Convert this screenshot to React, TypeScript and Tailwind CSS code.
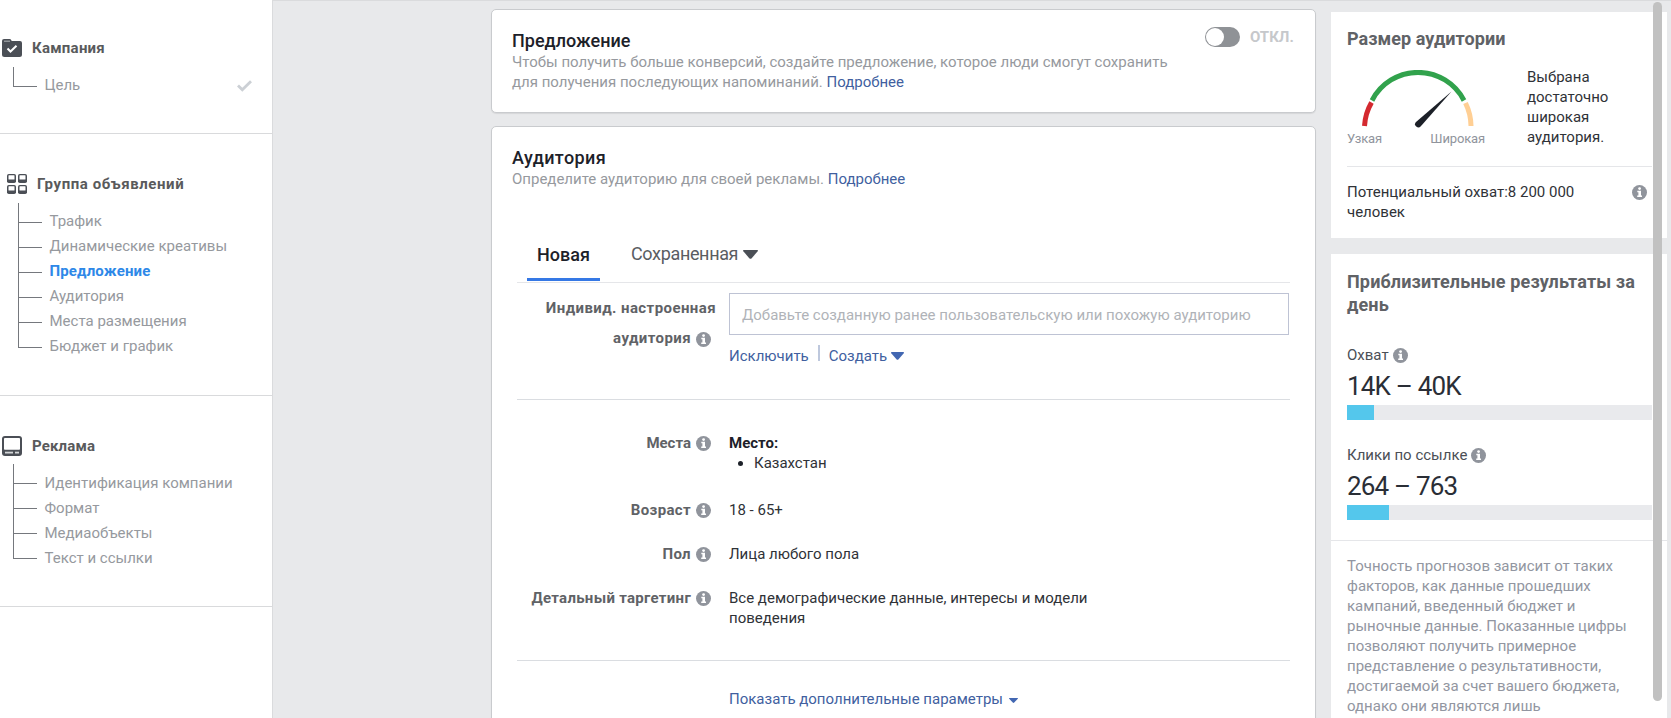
import React from "react";

type TreeItem = { label: string; active?: boolean; done?: boolean };

function FolderIcon() {
  return (
    <svg width="20" height="18" viewBox="0 0 20 18">
      <path d="M0 3.5V2a2 2 0 0 1 2-2h5.5a2 2 0 0 1 1.8 1.2l.4.8H18a2 2 0 0 1 2 2V15.500a2.500 2.500 0 0 1-2.500 2.500h-15A2.500 2.500 0 0 1 0 15.500z" fill="#4b4f56" />
      <path d="M2 2.200h6" stroke="#a4a7ab" strokeWidth="1.200" />
      <path d="M5.500 9.500l3 3L14.500 6.800" fill="none" stroke="#fff" strokeWidth="2" />
    </svg>
  );
}

function GridIcon() {
  const cells = [[0, 0], [11, 0], [0, 11], [11, 11]];
  return (
    <svg width="20" height="20" viewBox="0 0 20 20">
      {cells.map(([x, y]) => (
        <g key={`${x}-${y}`}>
          <rect x={x} y={y} width="9" height="9" rx="1.8" fill="#4b4f56" />
          <rect x={x + 1.5} y={y + 1.2} width="6" height="4.300" rx="0.500" fill="#fff" />
        </g>
      ))}
    </svg>
  );
}

function AdIcon() {
  return (
    <svg width="20" height="20" viewBox="0 0 20 20">
      <rect width="20" height="20" rx="3" fill="#4b4f56" />
      <rect x="2" y="2" width="16" height="11.700" rx="0.800" fill="#fff" />
      <rect x="3" y="15.700" width="8" height="1.800" fill="#d4d6d8" />
      <rect x="13" y="15.700" width="4" height="1.800" fill="#d4d6d8" />
    </svg>
  );
}

function Info({ className = "" }: { className?: string }) {
  return (
    <svg width="15" height="15" viewBox="0 0 15 15" className={`shrink-0 ${className}`}>
      <circle cx="7.500" cy="7.500" r="7.500" fill="#90949c" />
      <circle cx="7.600" cy="3.600" r="1.400" fill="#fff" />
      <path d="M5.300 5.800h3.700v4.700h1v1.500H5.200v-1.500h1.200V7.300H5.300z" fill="#fff" />
    </svg>
  );
}

function Caret({ w, h, color, className = "" }: { w: number; h: number; color: string; className?: string }) {
  return (
    <svg width={w} height={h} viewBox="0 0 15 9" preserveAspectRatio="none" className={`shrink-0 ${className}`}>
      <path d="M.6 0h13.800q.9.500.3 1.300L8.700 8.200q-1.200 1.300-2.400 0L.3 1.300Q-.3.500.6 0z" fill={color} />
    </svg>
  );
}

function Tree({ items, textClass }: { items: TreeItem[]; textClass: string }) {
  return (
    <ul>
      {items.map((item, i) => (
        <li key={item.label} className={`flex ${i === 0 ? "h-8" : "h-[25px]"}`}>
          <div className="flex w-6 shrink-0 flex-col">
            <div className={`border-b border-l border-[#75787d] ${i === 0 ? "h-5" : "h-[13px]"}`} />
            {i < items.length - 1 && <div className="h-3 border-l border-[#75787d]" />}
          </div>
          <div className={`flex h-[25px] grow items-center justify-between self-end pr-[20px] pl-[7.500px] ${textClass}`}>
            <span className={item.active ? "font-bold tracking-[0.15px] text-[#2d88e8]" : "text-[#96999e]"}>
              {item.label}
            </span>
            {item.done && (
              <svg width="15" height="12" viewBox="0 0 15 12" className="mt-px">
                <path d="M1 5.500l4.300 4.300L14 1.200" fill="none" stroke="#ccd0d5" strokeWidth="2.800" />
              </svg>
            )}
          </div>
        </li>
      ))}
    </ul>
  );
}

function Sidebar() {
  return (
    <nav className="w-[273px] shrink-0 border-r border-[#dadbdd] bg-white text-[15px] leading-5">
      <section className="h-[134px] border-b border-[#d9dadc] pt-[38px]">
        <div className="flex h-5 items-center gap-[10px] pl-[2px]">
          <FolderIcon />
          <h3 className="font-bold tracking-[0.25px] text-[#595a5c]">Кампания</h3>
        </div>
        <div className="pt-[9px] pl-[13px]">
          <Tree items={[{ label: "Цель", done: true }]} textClass="pb-[3px]" />
        </div>
      </section>
      <section className="h-[262px] border-b border-[#d9dadc] pt-10">
        <div className="flex h-5 items-center gap-[10px] pl-[7px]">
          <GridIcon />
          <h3 className="font-bold tracking-[0.57px] text-[#595a5c]">Группа объявлений</h3>
        </div>
        <div className="pt-[9px] pl-[18px]">
          <Tree
            textClass="pb-[3px]"
            items={[
              { label: "Трафик" },
              { label: "Динамические креативы" },
              { label: "Предложение", active: true },
              { label: "Аудитория" },
              { label: "Места размещения" },
              { label: "Бюджет и график" },
            ]}
          />
        </div>
      </section>
      <section className="h-[211px] border-b border-[#d9dadc] pt-10">
        <div className="flex h-5 items-center gap-[10px] pl-[2px]">
          <AdIcon />
          <h3 className="-mt-px font-bold tracking-[0.15px] text-[#595a5c]">Реклама</h3>
        </div>
        <div className="pt-2 pl-[13px]">
          <Tree
            textClass="pb-px"
            items={[
              { label: "Идентификация компании" },
              { label: "Формат" },
              { label: "Медиаобъекты" },
              { label: "Текст и ссылки" },
            ]}
          />
        </div>
      </section>
    </nav>
  );
}

function Link({ children }: { children: React.ReactNode }) {
  return <a className="text-[#415f9f]">{children}</a>;
}

function OfferCard() {
  return (
    <section className="flex h-[104px] items-start justify-between rounded-[5px] border border-[#c9cbce] bg-white pt-5 pl-5 shadow-[0_1px_1px_rgba(0,0,0,0.08)]">
      <div>
        <h2 className="h-[22px] text-[18px] leading-[21px] font-medium text-[#1d2129]">Предложение</h2>
        <p className="w-[670px] text-[#96999e]">
          Чтобы получить больше конверсий, создайте предложение, которое люди смогут сохранить
          <br />
          для получения последующих напоминаний. <Link>Подробнее</Link>
        </p>
      </div>
      <div className="-mt-[3px] flex items-center gap-[10px] pr-5">
        <div className="h-5 w-[35px] rounded-full bg-[#8f9296] p-px">
          <div className="h-[18px] w-[18px] rounded-full bg-white" />
        </div>
        <span className="w-[45px] font-bold text-[#c6c8cb]">ОТКЛ.</span>
      </div>
    </section>
  );
}

function Row({
  label,
  tracking = "",
  className,
  children,
}: {
  label: string;
  tracking?: string;
  className: string;
  children: React.ReactNode;
}) {
  return (
    <div className={`flex ${className}`}>
      <div className="flex h-5 w-[194px] items-center justify-end gap-[5px] font-bold text-[#606266]">
        <span className={tracking}>{label}</span>
        <Info className="mt-px" />
      </div>
      <div className="ml-[18px] text-[#2f3237]">{children}</div>
    </div>
  );
}

function AudienceCard() {
  return (
    <section className="mt-[13px] h-[620px] shrink-0 rounded-[5px] border border-[#c9cbce] bg-white pt-5 pr-[25px] shadow-[0_1px_1px_rgba(0,0,0,0.08)]">
      <h2 className="h-[22px] pl-5 text-[18px] leading-[21px] font-medium tracking-[0.42px] text-[#1d2129]">Аудитория</h2>
      <p className="pl-5 text-[#96999e]">
        Определите аудиторию для своей рекламы. <Link>Подробнее</Link>
      </p>
      <div className="ml-[25px] flex h-[94px] items-end border-b border-[#e5e6e9] pl-[10px] text-[18px]">
        <div className="mb-px flex h-[39px] w-[73px] justify-center border-b-[3px] border-[#3578e5] pt-[3px] font-medium text-[#1d2129]">
          Новая
        </div>
        <div className="mb-px ml-[31px] flex h-[39px] items-start gap-[5px] pt-[2px] tracking-[-0.35px] text-[#5a5d62]">
          Сохраненная
          <Caret w={15} h={9} color="#4b4f56" className="mt-[6px]" />
        </div>
      </div>
      <div className="ml-[25px] flex h-[117px] border-b border-[#dadde1] pt-[10px]">
        <div className="w-[199px] text-right leading-[30px] font-bold tracking-[0.42px] text-[#606266]">
          Индивид. настроенная
          <div className="flex items-center justify-end gap-[5px] pr-[5px]">
            аудитория <Info className="mt-[2px]" />
          </div>
        </div>
        <div className="ml-[13px]">
          <div className="flex h-[42px] w-[560px] items-center border border-[#bec3d4] pt-px pl-3 text-[#b0b3b8]">
            Добавьте созданную ранее пользовательскую или похожую аудиторию
          </div>
          <div className="mt-[11px] flex h-5 items-center">
            <Link>Исключить</Link>
            <span className="-mt-[6px] mr-[9px] ml-[9px] h-4 w-[2px] bg-[#bec8dd]" />
            <Link>Создать</Link>
            <Caret w={13} h={8} color="#4267b2" className="ml-1" />
          </div>
        </div>
      </div>
      <div className="ml-[25px] h-[261px] border-b border-[#dadde1] pt-[33px]">
        <Row label="Места" className="h-[67px]">
          <div className="font-bold text-[#1d2129]">Место:</div>
          <ul className="flex items-center pl-[9px]">
            <li className="flex items-center gap-[11px]">
              <span className="h-[5px] w-[5px] rounded-full bg-[#1d2129]" />
              Казахстан
            </li>
          </ul>
        </Row>
        <Row label="Возраст" tracking="tracking-[0.35px]" className="h-[44px]">18 - 65+</Row>
        <Row label="Пол" tracking="tracking-[0.35px]" className="h-[44px]">Лица любого пола</Row>
        <Row label="Детальный таргетинг" tracking="tracking-[0.3px]" className="h-10">
          <div className="w-[380px]">Все демографические данные, интересы и модели поведения</div>
        </Row>
      </div>
      <div className="mt-[28px] ml-[237px] flex items-center gap-[6px]">
        <Link>Показать дополнительные параметры</Link>
        <Caret w={9} h={5} color="#4267b2" className="mt-[3px]" />
      </div>
    </section>
  );
}

function Gauge() {
  return (
    <svg width="112" height="58" viewBox="0 0 112 58">
      <path d="M2.500 56A53.500 53.500 0 0 1 9.500 32.500" fill="none" stroke="#d4292f" strokeWidth="5" />
      <path d="M10 30.500A51.700 51.700 0 0 1 102 30.500" fill="none" stroke="#31a24c" strokeWidth="5" />
      <path d="M103.500 33A53.500 53.500 0 0 1 109 56" fill="none" stroke="#ffcf94" strokeWidth="5" />
      <path d="M89.500 21.500L54 52a3 3 0 0 0 4.800 4.300z" fill="#1c2028" />
    </svg>
  );
}

function Metric({ label, value, fill, className }: { label: string; value: string; fill: number; className: string }) {
  return (
    <div className={className}>
      <div className="flex h-5 items-center gap-[5px] text-[#4b4f56]">
        <span className="-mr-px">{label}</span>
        <Info />
      </div>
      <div className="mt-1 h-9 text-[26px] leading-[34px] font-normal tracking-[-0.8px] text-[#2a2e36]">{value}</div>
      <div className="h-[15px] w-[305px] bg-[#e9eaed]">
        <div className="h-full bg-[#54c7ec]" style={{ width: fill }} />
      </div>
    </div>
  );
}

function Aside() {
  return (
    <aside className="relative ml-[15px] w-[340px] shrink-0">
      <section className="mt-[11px] h-[226px] w-[336px] bg-white pt-[15px] pl-4">
        <h2 className="h-6 text-[18px] leading-[23px] font-bold tracking-[0.06px] text-[#606266]">Размер аудитории</h2>
        <div className="flex h-[116px] w-[305px] border-b border-[#e5e6e9]">
          <div className="w-[180px] pt-[19px]">
            <div className="pl-[15px]">
              <Gauge />
            </div>
            <div className="mt-[2px] flex w-[138px] justify-between text-[13px] leading-[18px] tracking-[-0.15px] text-[#90949c]">
              <span>Узкая</span>
              <span>Широкая</span>
            </div>
          </div>
          <p className="w-[100px] pt-4 text-[#2f3237]">Выбрана достаточно широкая аудитория.</p>
        </div>
        <div className="flex w-[300px] justify-between pt-[15px]">
          <p className="w-[240px] text-[#2f3237]">Потенциальный охват:8 200 000 человек</p>
          <Info className="mt-[3px]" />
        </div>
      </section>
      <section className="mt-4 w-[336px] bg-white">
        <div className="h-[287px] border-b border-[#e5e6e9] pt-4 pl-4">
          <h2 className="w-[310px] text-[18px] leading-[23px] font-bold tracking-[0.14px] text-[#606266]">
            Приблизительные результаты за
            <br />
            день
          </h2>
          <Metric label="Охват" value="14K – 40K" fill={27} className="mt-[29px]" />
          <Metric label="Клики по ссылке" value="264 – 763" fill={42} className="mt-[25px]" />
        </div>
        <p className="w-[300px] pt-[15px] pb-10 pl-4 text-[#9296a1]">
          Точность прогнозов зависит от таких
          <br />
          факторов, как данные прошедших
          <br />
          кампаний, введенный бюджет и
          <br />
          рыночные данные. Показанные цифры
          <br />
          позволяют получить примерное
          <br />
          представление о результативности,
          <br />
          достигаемой за счет вашего бюджета,
          <br />
          однако они являются лишь
        </p>
      </section>
      <div className="absolute top-px left-[322px] h-[699px] w-[9px] rounded-full bg-[#c1c1c1]" />
    </aside>
  );
}

export default function App() {
  return (
    <div className="flex h-[718px] w-[1671px] overflow-hidden bg-[#e8e9eb] font-['Roboto',sans-serif]">
      <Sidebar />
      <div className="flex grow border-t border-[#dadbdd] pl-[218px] text-[15px] leading-5">
        <main className="w-[825px] shrink-0 pt-2">
          <OfferCard />
          <AudienceCard />
        </main>
        <Aside />
      </div>
    </div>
  );
}
